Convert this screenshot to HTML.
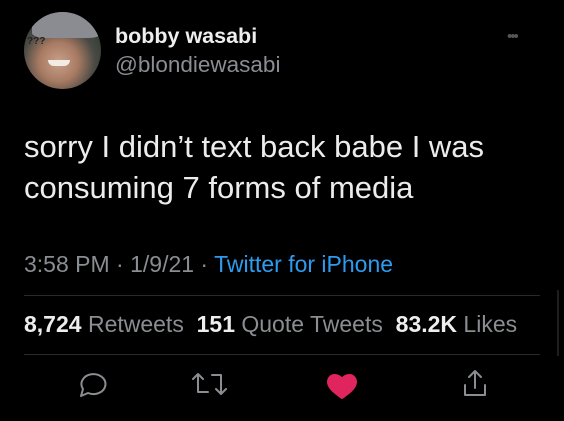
<!DOCTYPE html><html><head><style>
body{margin:0;width:564px;height:421px;background:#000;overflow:hidden;font-family:"Liberation Sans",sans-serif;position:relative;color:#e8e8e8}
.a{position:absolute;white-space:nowrap}
</style></head><body>
<div class="a" style="left:24px;top:12px;width:77px;height:77px;border-radius:50%;background:radial-gradient(circle at 45% 65%,#c9a08a 0,#a77a62 30%,#4a4a45 55%,#2a3a30 80%);overflow:hidden">
<div style="position:absolute;left:8px;top:0;width:70px;height:26px;background:#8a8c92;border-radius:40% 40% 20% 20%"></div>
<div style="position:absolute;left:24px;top:48px;width:22px;height:6px;background:#f2ece4;border-radius:0 0 10px 10px"></div>
<div style="position:absolute;left:3px;top:24px;font-size:10px;color:#222;font-weight:bold">???</div>
</div>
<div class="a" style="left:115px;top:24px;font-size:21.5px;font-weight:bold;color:#eee">bobby wasabi</div>
<div class="a" style="left:115px;top:52px;font-size:22.5px;color:#8a8d91">@blondiewasabi</div>
<div class="a" style="left:507px;top:28px;font-size:15px;color:#555;letter-spacing:-2px">•••</div>
<div class="a" style="left:24px;top:126px;font-size:31px;line-height:41px;color:#ececec;white-space:normal;width:540px">sorry I didn’t text back babe I was<br>consuming 7 forms of media</div>
<div class="a" style="left:24px;top:251px;font-size:23px;color:#8a8d91">3:58 PM · 1/9/21 · <span style="color:#2d9cf0">Twitter for iPhone</span></div>
<div class="a" style="left:24px;top:295px;width:516px;height:1px;background:#2a2a2a"></div>
<div class="a" style="left:24px;top:311px;font-size:23px;color:#8a8d91"><b style="color:#eee">8,724</b> Retweets&nbsp; <b style="color:#eee">151</b> Quote Tweets&nbsp; <b style="color:#eee">83.2K</b> Likes</div>
<div class="a" style="left:24px;top:354px;width:516px;height:1px;background:#2a2a2a"></div>
<div class="a" style="left:557px;top:290px;width:2px;height:66px;background:#1e1e1e"></div>
<svg class="a" style="left:0;top:365px" width="564" height="40" fill="none" stroke="#8a8d91" stroke-width="2" stroke-linecap="round" stroke-linejoin="round">
<path d="M81 31l2-7a12 10 0 1 1 5 4z"/>
<path d="M193 14l5-5 5 5M198 9v18h10M212 10h9v18M216 24l5 5 5-5"/>
<path d="M335 10c-5 0-7 4-7 7 0 6 7 11 14 16 7-5 14-10 14-16 0-3-2-7-7-7-3 0-6 2-7 4-1-2-4-4-7-4z" fill="#e0245e" stroke="#e0245e"/>
<path d="M465 20v10h20v-10M475 23V6M469 12l6-6 6 6"/>
</svg>
</body></html>
